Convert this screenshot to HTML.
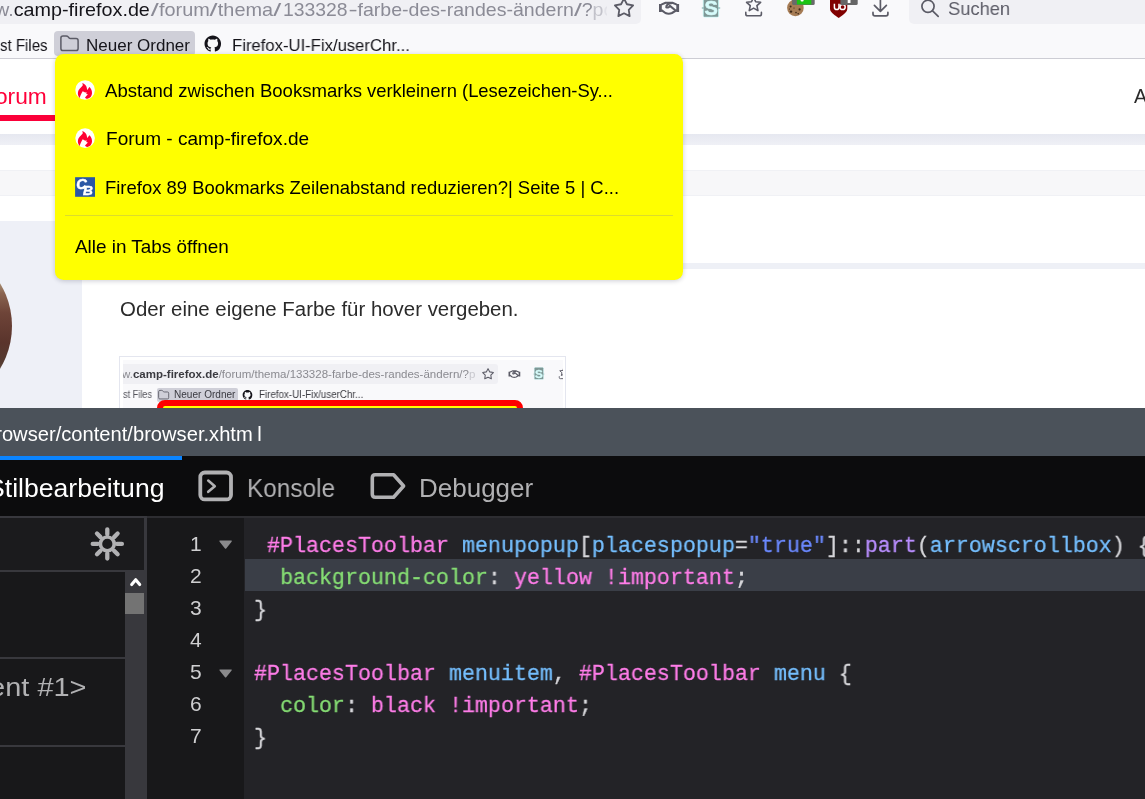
<!DOCTYPE html>
<html lang="de">
<head>
<meta charset="utf-8">
<title>Farbe des Randes ändern - camp-firefox.de</title>
<style>
html,body{margin:0;padding:0}
body{width:1145px;height:799px;overflow:hidden;position:relative;background:#fff;font-family:"Liberation Sans",sans-serif;}
.a{position:absolute}
.sl{display:inline-block;transform:scaleX(1.45);margin:0 1.2px}.hy{display:inline-block;transform:scaleX(1.4);transform-origin:100% 50%}
.t{position:absolute;white-space:nowrap;line-height:1;transform-origin:0 0;will-change:transform}
svg{position:absolute;overflow:visible}
/* chrome */
#chrome{left:0;top:0;width:1145px;height:58px;background:#f9f9fb;border-bottom:1px solid #cdcdd4}
#urlbar{left:-10px;top:-10px;width:651px;height:34px;background:#f0f0f4;border-radius:5px}
#searchbar{left:909px;top:-10px;width:260px;height:34px;background:#f0f0f4;border-radius:5px}
#bmbtn{left:54px;top:31px;width:141px;height:25px;background:#cfcfd8;border-radius:4px}
/* popup */
#popup{left:55px;top:53.7px;width:628px;height:226.3px;background:#ffff00;border-radius:8.5px;box-shadow:0 1px 5px rgba(0,0,40,.2)}
/* devtools */
#dt-title{left:0;top:408px;width:1145px;height:48px;background:#4b525a}
#dt-tabs{left:0;top:456px;width:1145px;height:60px;background:#0c0c0d}
#dt-blue{left:0;top:456px;width:182px;height:4px;background:#0a84ff}
#dt-body{left:0;top:516px;width:1145px;height:283px;background:#232327}
.code{white-space:pre;-webkit-text-stroke:0.3px;font-family:"Liberation Mono",monospace;font-size:22.6px;color:#d7d7db;transform:scaleX(0.9585)}
.p{color:#ff7de9}.b{color:#75bfff}.g{color:#86de74}.s{color:#6b89ff}.v{color:#b98eff}
.ln{font-family:"Liberation Sans",sans-serif;font-size:21px;color:#cfcfd1}
</style>
</head>
<body>

<!-- ============ page content ============ -->
<div class="a" id="page" style="left:0;top:59px;width:1145px;height:349px;background:#fff"></div>
<div class="a" style="left:0;top:134px;width:1145px;height:11px;background:linear-gradient(#e6e8f0,#eff0f6)"></div>
<div class="a" style="left:0;top:170px;width:1145px;height:25.5px;background:#f7f7f9;border-top:1px solid #f0f1f5;border-bottom:1px solid #f0f1f5;box-sizing:border-box"></div>
<div class="a" style="left:0;top:263px;width:1145px;height:6px;background:#eef0f6"></div>
<div class="a" style="left:0;top:221px;width:82px;height:187px;background:#eef0f7"></div>
<div class="a" id="avatar" style="left:-152px;top:244px;width:164px;height:164px;border-radius:50%;background:linear-gradient(180deg,#b09a7c 22%,#8a6450 30%,#6e4438 42%,#5a342c 60%,#553a30 72%,#6e5a4a 82%,#8e7e6c 92%)"></div>
<div class="t" id="forum" style="left:-19.2px;top:85.5px;font-size:22px;color:#ff0039;transform:scaleX(1.0346)">Forum</div>
<div class="a" style="left:0;top:115px;width:56px;height:6px;background:#fb0039"></div>
<div class="t" id="ahdr" style="left:1134.2px;top:87.2px;font-size:19.7px;color:#2b2b2b">Artikel</div>
<div class="t" id="oder" style="left:119.5px;top:299.9px;font-size:19.6px;color:#2b2b2b;transform:scaleX(1.0423)">Oder eine eigene Farbe für hover vergeben.</div>

<!-- thumbnail -->
<div class="a" id="thumb" style="left:119px;top:356px;width:447px;height:60px;border:1px solid #e4e6ef;box-sizing:border-box;background:#fff"></div>
<div class="a" style="left:123px;top:360px;width:440px;height:50px;background:#f9f9fb"></div>
<div class="a" style="left:123px;top:364px;width:375px;height:20px;background:#f0f0f4;border-radius:0 3px 3px 0"></div>
<div class="t" id="th-url" style="left:121.7px;top:368.6px;font-size:11.5px;color:#8a8a90;transform:scaleX(1.0012)">w.<b style="color:#3a3a40">camp-firefox.de</b>/forum/thema/133328-farbe-des-randes-ändern/?<span style="color:#c8c8ce">p</span></div>
<div class="a" style="left:120px;top:357px;width:3px;height:51px;background:#fff"></div>
<div class="a" style="left:157px;top:388px;width:81px;height:14px;background:#cfcfd8;border-radius:2px"></div>
<div class="t" id="th-bm1" style="left:123.0px;top:390px;font-size:10px;color:#55555c;transform:scaleX(0.9156)">st Files</div>
<div class="t" id="th-bm2" style="left:174.0px;top:390px;font-size:10px;color:#3a3a40;transform:scaleX(1.0042)">Neuer Ordner</div>
<div class="t" id="th-bm3" style="left:259.3px;top:390px;font-size:10px;color:#3a3a40;transform:scaleX(0.9767)">Firefox-UI-Fix/userChr...</div>
<svg style="left:123px;top:360px;overflow:hidden" width="440" height="48" viewBox="123 360 440 48"><use href="#ci" transform="translate(123 369.4) scale(0.585)"/></svg>
<div class="a" style="left:157px;top:400.4px;width:366px;height:20px;background:#ff0;border:6px solid #f00;border-radius:8px;box-sizing:border-box"></div>

<!-- ============ browser chrome ============ -->
<div class="a" id="chrome"></div>
<div class="a" id="urlbar"></div>
<div class="a" id="searchbar"></div>
<div class="t" id="url-a" style="left:-4.9px;top:-0.4px;font-size:19px;color:#8b8b96;transform:scaleX(1.0401)">w.<span style="color:#15141a">camp-firefox.de</span></div>
<div class="t" id="url-b" style="left:150.9px;top:-0.4px;font-size:19px;color:#8b8b96;transform:scaleX(1.0463)"><span class="sl">/</span>forum<span class="sl">/</span>thema<span class="sl">/</span></div>
<div class="t" id="url-c" style="left:283.2px;top:-0.4px;font-size:19px;color:#8b8b96;transform:scaleX(1.0188)">133328</div>
<div class="t" id="url-d" style="left:350.9px;top:-0.4px;font-size:19px;color:#8b8b96;transform:scaleX(1.0291)"><span class="hy">-</span>farbe-des-randes-ändern<span class="sl">/</span>?<span style="color:#c2c2ca">p</span><span style="color:#e2e2e8">o</span></div>
<div class="a" style="left:606.5px;top:0;width:7px;height:23px;background:#f0f0f4"></div>
<div class="t" id="suchen" style="left:947.6px;top:-0.6px;font-size:19px;color:#5b5b66;transform:scaleX(0.9650)">Suchen</div>

<div class="a" id="bmbtn"></div>
<div class="t" id="bm1" style="left:-0.5px;top:36.8px;font-size:17px;color:#15141a;transform:scaleX(0.8829)">st Files</div>
<div class="t" id="bm2" style="left:85.8px;top:36.8px;font-size:17px;color:#15141a;transform:scaleX(1.0006)">Neuer Ordner</div>
<div class="t" id="bm3" style="left:232.2px;top:36.8px;font-size:17px;color:#15141a;transform:scaleX(0.9804)">Firefox-UI-Fix/userChr...</div>

<svg style="left:0;top:0" width="1145" height="60"><g id="ci"><g fill="none" stroke="#5b5b66" stroke-width="1.7" stroke-linejoin="round" stroke-linecap="round"><path d="M624.00 -1.30 L626.94 4.25 L633.13 5.33 L628.76 9.85 L629.64 16.07 L624.00 13.30 L618.36 16.07 L619.24 9.85 L614.87 5.33 L621.06 4.25Z" stroke-width="1.8"/><path d="M661.8 4.4 L665.6 2.7 L672.4 2.7 L676.3 4.4 M661.8 10.4 L665.4 13 Q668.8 14.4 672 13 L676.3 10.4 M671.4 3.2 C668.2 3.4 666 5.4 666.3 7.3 C667.8 8 669.3 7.2 669.9 5.9 L675 10" stroke-width="2.1"/><path d="M660.4 4 V12 M677.7 4 V12" stroke-width="2.8" stroke-linecap="butt"/><path d="M753.60 -2.80 L755.66 1.77 L760.64 2.31 L756.93 5.68 L757.95 10.59 L753.60 8.10 L749.25 10.59 L750.27 5.68 L746.56 2.31 L751.54 1.77Z" stroke-width="1.6"/><path d="M745.8 12.4 V14 Q745.8 15.8 747.6 15.8 H759.6 Q761.4 15.8 761.4 14 V12.4" stroke-width="1.6"/><path d="M880.4 -2 V11 M874.4 5.4 L880.4 11.4 L886.4 5.4 M873 12.4 V14 Q873 15.9 874.9 15.9 H886 Q887.9 15.9 887.9 14 V12.4"/><circle cx="928" cy="6.3" r="6.1"/><path d="M932.6 10.9 L938.2 16.4"/></g><rect x="703.3" y="-3" width="15.3" height="20" rx="1.2" fill="#7f9896" stroke="#c9f7f6" stroke-width="1"/><rect x="701.8" y="7.2" width="18.4" height="1.6" fill="#9fc4c2"/><rect x="703.8" y="-3" width="14.3" height="19.5" fill="#7f9896"/><text x="711.1" y="15" text-anchor="middle" font-family="Liberation Sans, sans-serif" font-weight="bold" font-size="20" fill="#d6fbfa" stroke="#d6fbfa" stroke-width="0.5">S</text><circle cx="795.4" cy="7.9" r="8.3" fill="#a67c55"/><g fill="#3b2616"><circle cx="790.6" cy="6.6" r="1"/><circle cx="791" cy="11.6" r="1.2"/><circle cx="796" cy="12.6" r=".8"/><circle cx="799.6" cy="9.4" r="1.1"/><circle cx="798.2" cy="13.8" r=".8"/><circle cx="794" cy="8" r=".6"/><circle cx="789.4" cy="9" r=".6"/></g><path d="M792.1 -2 H814.7 V3.4 Q814.7 4.9 813.2 4.9 H793.6 Q792.1 4.9 792.1 3.4Z" fill="#6a6a6a"/><rect x="796.9" y="-2" width="14.4" height="6.5" fill="#1cc414"/><rect x="800.6" y="-1" width="3" height="2.4" rx="1" fill="#fff"/><path d="M830 -2 H847.3 V9 Q847.3 12.5 838.7 18 Q830 12.5 830 9Z" fill="#800000"/><g fill="none" stroke="#fff" stroke-width="1.5"><path d="M834.4 3.8 V7.2 Q834.4 9.6 836.7 9.6 Q839 9.6 839 7.2 V3.8"/><circle cx="842.6" cy="7" r="2.6"/></g><path d="M840.4 -2 H857.7 V3.4 Q857.7 4.9 856.2 4.9 H841.9 Q840.4 4.9 840.4 3.4Z" fill="#666"/><rect x="847.7" y="-1" width="2.8" height="4" fill="#fff"/><path d="M60.9 38 Q60.9 35.9 63 35.9 H66.2 Q67.4 35.9 68.2 36.9 L68.9 37.8 Q69.5 38.6 70.6 38.6 H76 Q78.1 38.6 78.1 40.7 V48.4 Q78.1 50.5 76 50.5 H63 Q60.9 50.5 60.9 48.4Z" fill="none" stroke="#5b5b66" stroke-width="1.5"/><g transform="translate(204.5,35.4) scale(1.035)"><path fill="#15141a" d="M8 0C3.58 0 0 3.58 0 8c0 3.54 2.29 6.53 5.47 7.59.4.07.55-.17.55-.38 0-.19-.01-.82-.01-1.49-2.01.37-2.53-.49-2.69-.94-.09-.23-.48-.94-.82-1.13-.28-.15-.68-.52-.01-.53.63-.01 1.08.58 1.23.82.72 1.21 1.87.87 2.33.66.07-.52.28-.87.51-1.07-1.78-.2-3.64-.89-3.64-3.95 0-.87.31-1.59.82-2.15-.08-.2-.36-1.02.08-2.12 0 0 .67-.21 2.2.82.64-.18 1.32-.27 2-.27.68 0 1.36.09 2 .27 1.53-1.04 2.2-.82 2.2-.82.44 1.1.16 1.92.08 2.12.51.56.82 1.27.82 2.15 0 3.07-1.87 3.75-3.65 3.95.29.25.54.73.54 1.48 0 1.07-.01 1.93-.01 2.2 0 .21.15.46.55.38A8.013 8.013 0 0016 8c0-4.42-3.58-8-8-8z"/></g></g></svg>
<!-- ============ popup ============ -->
<div class="a" id="popup"></div>
<div class="t" id="mi1" style="left:104.7px;top:81.6px;font-size:18.2px;color:#000;transform:scaleX(1.0214)">Abstand zwischen Booksmarks</div>
<div class="t" id="mi1b" style="left:366.6px;top:81.6px;font-size:18.2px;color:#000;transform:scaleX(1.0107)">verkleinern (Lesezeichen-Sy...</div>
<div class="t" id="mi2" style="left:105.6px;top:129.9px;font-size:18.2px;color:#000;transform:scaleX(1.0466)">Forum - camp-firefox.de</div>
<div class="t" id="mi3" style="left:105.0px;top:178.7px;font-size:18.2px;color:#000;transform:scaleX(1.0142)">Firefox 89 Bookmarks Zeilenabstand reduzieren?| Seite 5 | C...</div>
<div class="a" style="left:65px;top:215px;width:608px;height:1px;background:#dcdc2c"></div>
<div class="t" id="mi4" style="left:75.4px;top:237.6px;font-size:18.2px;color:#000;transform:scaleX(1.0387)">Alle in Tabs öffnen</div>

<svg style="left:0;top:0" width="700" height="280"><g transform="translate(72,77)"><circle cx="13.1" cy="13" r="9.8" fill="#fff"/><path fill="#ff0033" d="M10.2 6 C12.5 6.5 14.8 8.5 15.1 12.2 L15.6 13 C16 12 16.8 10.8 17.6 10.1 C19.2 11.8 20.2 14.2 20 16.6 C19.8 19.2 18.2 21.4 15.4 21.8 C14.4 21.9 13.6 21.4 13 20.5 L15.9 17.3 L14.3 16.9 L14.6 15.2 L13.2 15.6 L10.7 14.2 C9.6 16 8.2 18.6 7.7 20.9 C6.2 19.4 5.6 17.2 6 15 C6.4 12.6 8.6 11 10.7 8.5 C10.9 7.6 10.6 6.8 10.2 6Z"/></g><g transform="translate(72,125.1)"><circle cx="13.1" cy="13" r="9.8" fill="#fff"/><path fill="#ff0033" d="M10.2 6 C12.5 6.5 14.8 8.5 15.1 12.2 L15.6 13 C16 12 16.8 10.8 17.6 10.1 C19.2 11.8 20.2 14.2 20 16.6 C19.8 19.2 18.2 21.4 15.4 21.8 C14.4 21.9 13.6 21.4 13 20.5 L15.9 17.3 L14.3 16.9 L14.6 15.2 L13.2 15.6 L10.7 14.2 C9.6 16 8.2 18.6 7.7 20.9 C6.2 19.4 5.6 17.2 6 15 C6.4 12.6 8.6 11 10.7 8.5 C10.9 7.6 10.6 6.8 10.2 6Z"/></g><rect x="75.1" y="177.2" width="19.9" height="19.6" fill="#2a57a5"/><text font-family="Liberation Sans, sans-serif" font-weight="bold" font-style="italic" fill="#fff" stroke="#fff" stroke-width="0.5"><tspan x="76.2" y="189.3" font-size="14.6">C</tspan><tspan x="83.1" y="194.9" font-size="13.6">B</tspan></text></svg>
<!-- ============ devtools ============ -->
<div class="a" id="dt-title"></div>
<div class="a" id="dt-tabs"></div>
<div class="a" id="dt-blue"></div>
<div class="a" id="dt-body"></div>
<div class="t" id="dt-path" style="left:-15.7px;top:424.6px;font-size:19.8px;color:#fff;transform:scaleX(1.0185)">browser/content/browser.xhtm<span style="margin-left:4.5px">l</span></div>
<div class="t" id="tab1" style="left:-13.5px;top:474.6px;font-size:26px;color:#fff;transform:scaleX(1.0234)">Stilbearbeitung</div>
<div class="t" id="tab2" style="left:247.2px;top:474.6px;font-size:26px;color:#b1b1b3;transform:scaleX(0.9375)">Konsole</div>
<div class="t" id="tab3" style="left:419.0px;top:474.6px;font-size:26px;color:#b1b1b3;transform:scaleX(0.9965)">Debugger</div>

<div class="a" style="left:0;top:515.5px;width:1145px;height:2.2px;background:#2d2d31"></div><div class="a" style="left:0;top:516px;width:147px;height:2px;background:#38383d"></div>
<div class="a" style="left:0;top:518px;width:147px;height:281px;background:#18181a"></div>
<div class="a" style="left:0;top:518px;width:144px;height:52px;background:#1b1b1d"></div>
<div class="a" style="left:0;top:570px;width:147px;height:2px;background:#38383d"></div>
<div class="a" style="left:125px;top:572px;width:22px;height:227px;background:#38383d"></div>
<div class="a" style="left:144px;top:518px;width:3px;height:281px;background:#38383d"></div>
<div class="a" style="left:125px;top:593px;width:19px;height:21px;background:#737373"></div>
<div class="a" style="left:0;top:657px;width:125px;height:2px;background:#38383d"></div>
<div class="a" style="left:0;top:745px;width:125px;height:2px;background:#38383d"></div>
<div class="t" id="ent" style="left:-35.2px;top:673.9px;font-size:26px;color:#b1b1b3;transform:scaleX(1.1132)">ment #1&gt;</div>

<div class="a" style="left:147px;top:518px;width:97px;height:281px;background:#18181a"></div>
<div class="a" style="left:245px;top:559px;width:900px;height:32px;background:#3a3e47"></div>

<div class="t ln" id="ln1" style="left:189.6px;top:532.6px">1</div>
<div class="t ln" id="ln2" style="left:189.6px;top:564.7px">2</div>
<div class="t ln" id="ln3" style="left:189.6px;top:596.7px">3</div>
<div class="t ln" id="ln4" style="left:189.6px;top:628.8px">4</div>
<div class="t ln" id="ln5" style="left:189.6px;top:660.8px">5</div>
<div class="t ln" id="ln6" style="left:189.6px;top:692.9px">6</div>
<div class="t ln" id="ln7" style="left:189.6px;top:724.9px">7</div>

<div class="t code" id="c1" style="left:253.8px;top:535.0px"> <span class="p">#PlacesToolbar</span> <span class="b">menupopup</span>[<span class="b">placespopup</span>=<span class="s">"true"</span>]::<span class="v">part</span>(<span class="b">arrowscrollbox</span>) {</div>
<div class="t code" id="c2" style="left:253.8px;top:567.0px">  <span class="g">background-color</span>: <span class="p">yellow</span> <span class="p">!important</span>;</div>
<div class="t code" id="c3" style="left:253.8px;top:599.1px">}</div>
<div class="t code" id="c5" style="left:253.8px;top:663.2px"><span class="p">#PlacesToolbar</span> <span class="b">menuitem</span>, <span class="p">#PlacesToolbar</span> <span class="b">menu</span> {</div>
<div class="t code" id="c6" style="left:253.8px;top:695.2px">  <span class="g">color</span>: <span class="p">black</span> <span class="p">!important</span>;</div>
<div class="t code" id="c7" style="left:253.8px;top:727.3px">}</div>

<svg style="left:0;top:0" width="1145" height="799"><g fill="none" stroke="#b1b1b3" stroke-linecap="round" stroke-linejoin="round"><rect x="200.3" y="472.5" width="30.7" height="26.9" rx="4.5" stroke-width="3.8"/><path d="M208.2 480.6 L214.8 486.2 L208.2 491.8" stroke-width="2.6"/><path d="M375.3 474.7 H393.6 L403.6 486 L393.6 497.2 H375.3 Q372.3 497.2 372.3 494.2 V477.7 Q372.3 474.7 375.3 474.7Z" stroke-width="3.6"/><circle cx="107.3" cy="543.9" r="6.9" stroke-width="3.6"/><path d="M116.90 543.90 L121.90 543.90 M114.09 550.69 L117.62 554.22 M107.30 553.50 L107.30 558.50 M100.51 550.69 L96.98 554.22 M97.70 543.90 L92.70 543.90 M100.51 537.11 L96.98 533.58 M107.30 534.30 L107.30 529.30 M114.09 537.11 L117.62 533.58 " stroke-width="4.3"/></g><path d="M131.7 584.5 L135.7 579.7 L139.7 584.5" fill="none" stroke="#fff" stroke-width="3.1" stroke-linecap="round" stroke-linejoin="round"/><path d="M220 540.6 H231.2 Q232.4 540.6 231.6 541.7 L226.4 548.2 Q225.6 549.2 224.8 548.2 L219.6 541.7 Q218.8 540.6 220 540.6Z" fill="#8a8a8c"/><path d="M220 669.5 H231.2 Q232.4 669.5 231.6 670.6 L226.4 677.1 Q225.6 678.1 224.8 677.1 L219.6 670.6 Q218.8 669.5 220 669.5Z" fill="#8a8a8c"/></svg>
</body>
</html>
